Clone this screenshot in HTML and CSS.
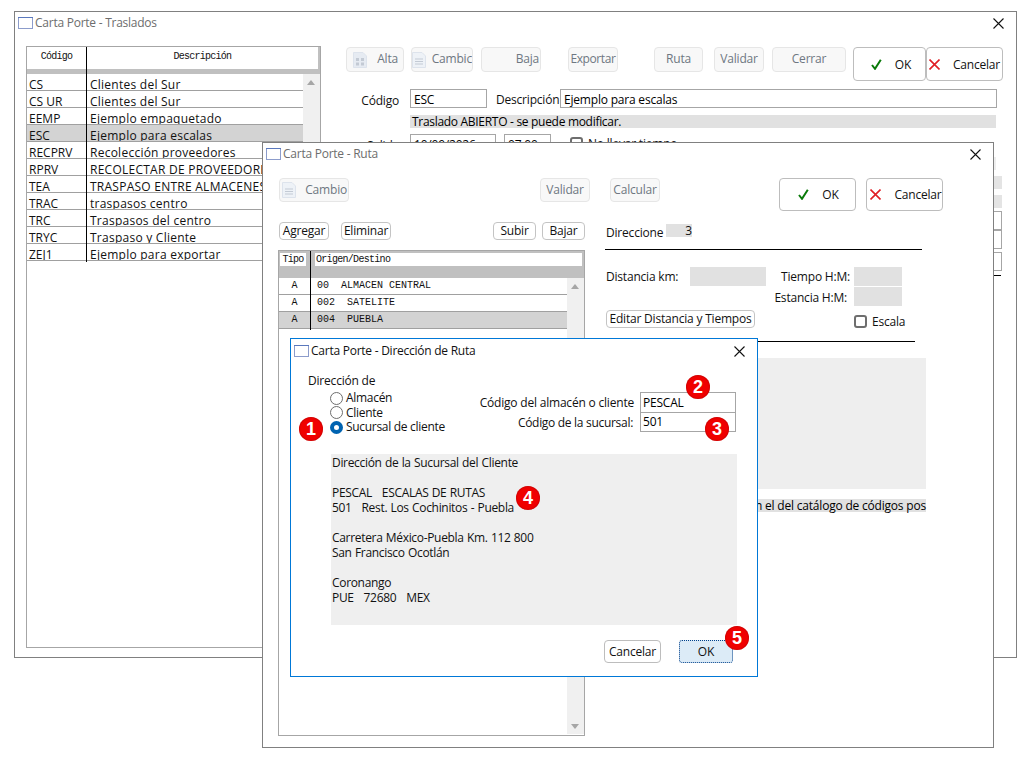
FILE: index.html
```html
<!DOCTYPE html>
<html>
<head>
  <meta charset="utf-8">
  <title>Carta Porte</title>
  <link rel="stylesheet" href="styles.css">
</head>
<body>
<svg class="defs" width="0" height="0">
  <symbol id="ico-win" viewBox="0 0 15 12">
    <rect x="0.5" y="0.5" width="14" height="11" fill="#fff" stroke="#8c9ccb"/>
    <path d="M0 0.5H15" stroke="#5a78bd"/>
  </symbol>
  <symbol id="ico-close" viewBox="0 0 11 11">
    <path d="M0.5 0.5L10.5 10.5M10.5 0.5L0.5 10.5" stroke="#111" stroke-width="1.1" fill="none"/>
  </symbol>
  <symbol id="ico-check" viewBox="0 0 11 11">
    <path d="M1 6L4 9.8L9.8 0.8" stroke="#0a7a0a" stroke-width="2" fill="none"/>
  </symbol>
  <symbol id="ico-x" viewBox="0 0 11 11">
    <path d="M0.5 0.5L10.5 10.5M10.5 0.5L0.5 10.5" stroke="#e01f26" stroke-width="1.6" fill="none"/>
  </symbol>
  <symbol id="ico-grid" viewBox="0 0 14 16">
    <path d="M0.5 0.5H10L13.5 4V15.5H0.5Z" fill="#e6ebf2" stroke="#dde3ec"/>
    <path d="M3 6H6V9H3ZM8 6H11V9H8ZM3 10.5H6V13.5H3ZM8 10.5H11V13.5H8Z" fill="#c3cad4"/>
  </symbol>
  <symbol id="ico-list" viewBox="0 0 14 16">
    <path d="M0.5 0.5H10L13.5 4V15.5H0.5Z" fill="#eef2f7" stroke="#dde3ec"/>
    <path d="M3 7H11M3 9.5H11M3 12H11" stroke="#c3cad4"/>
  </symbol>
</svg>

<!-- ventana de atras -->
<div class="win win-back">
  <div class="title">
    <svg class="ico-win"><use href="#ico-win"/></svg>
    <span class="title-txt">Carta Porte - Traslados</span>
    <svg class="ico-close"><use href="#ico-close"/></svg>
  </div>
  <div class="back-body">
    <div class="list">
      <div class="rule"></div>
      <div class="list-head">
        <div class="lh-code">Código</div>
        <div class="lh-desc">Descripción</div>
      </div>
      <div class="list-main">
        <div class="rows">
          <div class="row"><span class="c-code">CS</span><span>Clientes del Sur</span></div>
          <div class="row"><span class="c-code">CS UR</span><span>Clientes del Sur</span></div>
          <div class="row"><span class="c-code">EEMP</span><span>Ejemplo empaquetado</span></div>
          <div class="row sel"><span class="c-code">ESC</span><span>Ejemplo para escalas</span></div>
          <div class="row"><span class="c-code">RECPRV</span><span>Recolección proveedores</span></div>
          <div class="row"><span class="c-code">RPRV</span><span>RECOLECTAR DE PROVEEDORES</span></div>
          <div class="row"><span class="c-code">TEA</span><span>TRASPASO ENTRE ALMACENES</span></div>
          <div class="row"><span class="c-code">TRAC</span><span>traspasos centro</span></div>
          <div class="row"><span class="c-code">TRC</span><span>Traspasos del centro</span></div>
          <div class="row"><span class="c-code">TRYC</span><span>Traspaso y Cliente</span></div>
          <div class="row"><span class="c-code">ZEJ1</span><span>Ejemplo para exportar</span></div>
        </div>
        <div class="sbar"><i class="arr-up"></i></div>
      </div>
    </div>

    <div class="back-right">
      <div class="toolbar">
        <div class="btn off w-alta"><svg class="ico-doc"><use href="#ico-grid"/></svg><span class="push">Alta</span></div>
        <div class="btn off w-cambio"><svg class="ico-doc"><use href="#ico-list"/></svg><span class="push">Cambic</span></div>
        <div class="btn off w-baja"><span class="push">Baja</span></div>
        <div class="btn off w-exp">Exportar</div>
        <div class="btn off w-ruta">Ruta</div>
        <div class="btn off w-val">Validar</div>
        <div class="btn off w-cerrar">Cerrar</div>
        <div class="btn big w-ok"><svg class="ico-mark"><use href="#ico-check"/></svg>OK</div>
        <div class="btn big w-can"><svg class="ico-mark"><use href="#ico-x"/></svg>Cancelar</div>
      </div>
      <div class="frow f1">
        <label class="f-lab">Código</label>
        <div class="inp i-cod">ESC</div>
        <label class="f-desc">Descripción</label>
        <div class="inp i-desc">Ejemplo para escalas</div>
      </div>
      <div class="strip s-estado">Traslado ABIERTO - se puede modificar.</div>
      <div class="frow f3">
        <label class="f-lab">Salida</label>
        <div class="inp i-fecha">10/09/2026</div>
        <div class="inp i-hora">07:00</div>
        <i class="chk"></i>
        <span>No llevar tiempo</span>
      </div>
      <div class="tail">
        <div class="t-strip t1"></div>
        <div class="t-strip t2"></div>
        <div class="t-strip t3"></div>
        <div class="inp t-inp t4"></div>
        <div class="inp t-inp t5"></div>
        <div class="inp t-inp t6"></div>
        <div class="t-line"></div>
      </div>
    </div>
  </div>
</div>

<!-- ventana ruta -->
<div class="win win-ruta">
  <div class="title">
    <svg class="ico-win"><use href="#ico-win"/></svg>
    <span class="title-txt">Carta Porte - Ruta</span>
    <svg class="ico-close"><use href="#ico-close"/></svg>
  </div>
  <div class="ruta-body">
    <div class="toolbar r-tools">
      <div class="btn off w-rcambio"><svg class="ico-doc"><use href="#ico-list"/></svg><span class="push">Cambio</span></div>
      <div class="btn off w-rval">Validar</div>
      <div class="btn off w-rcalc">Calcular</div>
      <div class="btn big w-rok"><svg class="ico-mark"><use href="#ico-check"/></svg>OK</div>
      <div class="btn big w-rcan"><svg class="ico-mark"><use href="#ico-x"/></svg>Cancelar</div>
    </div>
    <div class="ruta-cols">
      <div class="ruta-left">
        <div class="acts">
          <div class="btn small w-agr">Agregar</div>
          <div class="btn small w-eli">Eliminar</div>
          <div class="btn small w-sub">Subir</div>
          <div class="btn small w-baj">Bajar</div>
        </div>
        <div class="dest">
          <div class="rule2"></div>
          <div class="dest-head">
            <div class="dh-tipo">Tipo</div>
            <div class="dh-org">Origen/Destino</div>
          </div>
          <div class="dest-main">
            <div class="rows">
              <div class="drow"><span class="d-tipo">A</span><span>00  ALMACEN CENTRAL</span></div>
              <div class="drow"><span class="d-tipo">A</span><span>002  SATELITE</span></div>
              <div class="drow sel"><span class="d-tipo">A</span><span>004  PUEBLA</span></div>
            </div>
            <div class="sbar sbar2"><i class="arr-up"></i><i class="arr-down"></i></div>
          </div>
        </div>
      </div>
      <div class="ruta-right">
        <div class="dirs"><span class="dirs-lab">Direccione</span><span class="gbox g-dirs">3</span></div>
        <div class="hline l1"></div>
        <div class="drow1">
          <span class="lab-dist">Distancia km:</span><span class="gbox g-dist"></span>
          <span class="lab-tiempo">Tiempo H:M:</span><span class="gbox g-time"></span>
        </div>
        <div class="drow2">
          <span class="lab-est">Estancia H:M:</span><span class="gbox g-time"></span>
        </div>
        <div class="drow3">
          <div class="btn small w-edit">Editar Distancia y Tiempos</div>
          <i class="chk chk-esc"></i><span>Escala</span>
        </div>
        <div class="hline l2"></div>
        <div class="gpanel"></div>
        <div class="strip s-cat"><span>n el del catálogo de códigos pos</span></div>
      </div>
    </div>
  </div>
</div>

<!-- dialogo -->
<div class="win win-dlg">
  <div class="title title-on">
    <svg class="ico-win"><use href="#ico-win"/></svg>
    <span class="title-txt">Carta Porte - Dirección de Ruta</span>
    <svg class="ico-close"><use href="#ico-close"/></svg>
  </div>
  <div class="dlg-top">
    <div class="dlg-radios">
      <div class="rad-title">Dirección de</div>
      <div class="rad"><i class="radio"></i>Almacén</div>
      <div class="rad"><i class="radio"></i>Cliente</div>
      <div class="rad"><i class="radio on"></i>Sucursal de cliente</div>
    </div>
    <div class="dlg-codes">
      <div class="code-row"><label>Código del almacén o cliente</label><div class="inp i-c1">PESCAL</div></div>
      <div class="code-row r2"><label>Código de la sucursal:</label><div class="inp i-c2">501</div></div>
    </div>
  </div>
  <pre class="addr">Dirección de la Sucursal del Cliente

PESCAL   ESCALAS DE RUTAS
501   Rest. Los Cochinitos - Puebla

Carretera México-Puebla Km. 112 800
San Francisco Ocotlán

Coronango
PUE   72680   MEX</pre>
  <div class="dlg-foot">
    <div class="btn foot-can">Cancelar</div>
    <div class="btn foot-ok">OK</div>
  </div>
  <span class="badge b1">1</span>
  <span class="badge b2">2</span>
  <span class="badge b3">3</span>
  <span class="badge b4">4</span>
  <span class="badge b5">5</span>
</div>
</body>
</html>
```

FILE: styles.css
```css
* {
  box-sizing: border-box;
}
html, body {
  margin: 0;
  height: 100%;
  background: #fff;
}
body {
  position: relative;
  overflow: hidden;
  font-family: "Open Sans", "Noto Sans", sans-serif;
  font-size: 12px;
  letter-spacing: -0.2px;
  color: #111;
}
.defs {
  position: absolute;
}
label {
  display: block;
}
i {
  display: block;
}

/* ventanas */
.win {
  position: absolute;
  background: #fff;
  border: 1px solid #808080;
}
.win-back {
  left: 14px;
  top: 11px;
  width: 1003px;
  height: 647px;
}
.win-ruta {
  left: 262px;
  top: 142px;
  width: 732px;
  height: 606px;
}
.win-dlg {
  left: 290px;
  top: 338px;
  width: 468px;
  height: 339px;
  border-color: #0078d7;
}
.title {
  display: flex;
  align-items: center;
  height: 22px;
  padding: 0 12px 0 3px;
  color: #6d6d6d;
}
.title-on {
  height: 24px;
  color: #111;
}
.title-txt {
  padding-bottom: 2px;
  letter-spacing: -0.25px;
}
.ico-win {
  width: 15px;
  height: 12px;
  margin-right: 2px;
}
.ico-close {
  width: 11px;
  height: 11px;
  margin-left: auto;
}
.ico-doc {
  flex: none;
  width: 14px;
  height: 16px;
  margin-left: 6px;
}
.ico-mark {
  flex: none;
  width: 11px;
  height: 11px;
  margin-right: 13px;
}

/* botones */
.btn {
  display: flex;
  align-items: center;
  justify-content: center;
  flex: none;
  background: #fff;
  border: 1px solid #bdbdbd;
  border-radius: 4px;
  white-space: nowrap;
  overflow: hidden;
}
.off {
  height: 25px;
  padding-bottom: 2px;
  background: #f8f8f8;
  border-color: #e6e6e6;
  color: #6e7781;
}
.off .ico-doc {
  margin-top: 2px;
}
.big {
  height: 34px;
}
.small {
  height: 18px;
  padding-bottom: 2px;
  border-color: #c4c4c4;
}
.push {
  margin-left: auto;
  padding-right: 5px;
}
.toolbar {
  display: flex;
  align-items: flex-start;
}
.w-alta { width: 58px; }
.w-cambio { width: 62px; margin-left: 7px; }
.w-cambio .ico-doc { margin-left: 0; }
.w-cambio .push { padding-right: 0; }
.w-baja { width: 60px; margin-left: 8px; }
.w-baja .push { padding-right: 1px; }
.w-exp { width: 50px; margin-left: 27px; letter-spacing: -0.4px; }
.w-ruta { width: 49px; margin-left: 36px; }
.w-val { width: 50px; margin-left: 11px; }
.w-cerrar { width: 74px; margin-left: 8px; }
.w-ok { width: 73px; margin-left: 7px; padding-left: 3px; }
.w-can { width: 77px; }

/* cuerpo ventana de atras */
.back-body {
  display: flex;
  padding: 12px 0 0 11px;
}
.list {
  position: relative;
  flex: none;
  width: 295px;
  height: 602px;
  border: 1px solid #a6a6a6;
}
.rule {
  position: absolute;
  left: 59px;
  top: 0;
  width: 1px;
  height: 215px;
  background: #000;
}
.list-head {
  display: flex;
  height: 27px;
  padding-bottom: 5px;
  padding-right: 2px;
  background: #c0c0c0;
  font-family: "Liberation Mono", monospace;
  font-size: 10px;
  letter-spacing: -0.75px;
  line-height: 20px;
  text-align: center;
}
.lh-code {
  width: 59px;
  margin-right: 1px;
  background: #fff;
}
.lh-desc {
  flex: 1;
  background: #fff;
}
.list-main,
.dest-main {
  display: flex;
}
.rows {
  flex: 1;
}
.row {
  display: flex;
  height: 17px;
  padding: 0 0 0 2px;
  border-bottom: 1px solid #a0a0a0;
  line-height: 22px;
  letter-spacing: 0.25px;
  white-space: nowrap;
  overflow: hidden;
}
.c-code {
  width: 61px;
  flex: none;
  letter-spacing: 0;
}
.sel {
  background: #d3d3d3;
}
.sbar {
  position: relative;
  flex: none;
  width: 17px;
  height: 573px;
  background: #f0f0f0;
}
.sbar2 {
  height: 456px;
}
.arr-up,
.arr-down {
  position: absolute;
  left: 4px;
  width: 0;
  height: 0;
  border-left: 4px solid transparent;
  border-right: 4px solid transparent;
}
.arr-up {
  top: 6px;
  border-bottom: 5px solid #a6a6a6;
}
.arr-down {
  bottom: 5px;
  border-top: 5px solid #a6a6a6;
}

.back-right {
  flex: 1;
  margin-left: 25px;
  padding-top: 1px;
}
.frow {
  display: flex;
  align-items: center;
}
.f1 {
  height: 19px;
  margin-top: 8px;
}
.f-lab {
  width: 53px;
  margin-right: 11px;
  padding-top: 3px;
  text-align: right;
}
.f-desc {
  width: 61px;
  margin: 0 3px 0 9px;
  padding-top: 1px;
}
.inp {
  flex: none;
  height: 19px;
  padding-left: 3px;
  border: 1px solid #a6a6a6;
  background: #fff;
  color: #000;
  line-height: 19px;
}
.i-cod { width: 77px; }
.i-desc { width: 437px; }
.strip {
  background: #e1e1e1;
  color: #000;
  line-height: 13px;
  white-space: nowrap;
}
.s-estado {
  width: 586px;
  height: 13px;
  margin: 7px 0 0 64px;
  padding-left: 2px;
  letter-spacing: -0.3px;
}
.f3 {
  height: 19px;
  margin-top: 6px;
}
.i-fecha { width: 86px; }
.i-hora { width: 47px; margin-left: 8px; }
.chk {
  flex: none;
  width: 13px;
  height: 13px;
  margin: 0 5px 0 19px;
  border: 2px solid #6e6e6e;
  border-radius: 3px;
  background: #fff;
}
.tail {
  margin-left: 64px;
}
.t-strip {
  height: 13px;
  background: #e4e4e4;
}
.t1 { width: 586px; margin-top: 4px; background: #eee; }
.t2 { width: 592px; margin-top: 6px; }
.t3 { width: 592px; margin-top: 6px; }
.t-inp { width: 592px; }
.t4 { margin-top: 3px; }
.t5 { margin-top: 0; }
.t6 { margin-top: 3px; }
.t-line {
  width: 591px;
  height: 1px;
  margin-top: 4px;
  background: #000;
}

/* cuerpo ruta */
.ruta-body {
  padding: 13px 0 0 16px;
}
.r-tools .off {
  height: 24px;
}
.w-rcambio { width: 70px; }
.w-rcambio .ico-doc { margin-left: 2px; }
.w-rcambio .push { padding-right: 1px; }
.w-rval { width: 50px; margin-left: 191px; }
.w-rcalc { width: 50px; margin-left: 20px; }
.w-rok { width: 77px; margin-left: 119px; height: 33px; padding-left: 2px; }
.w-rcan { width: 77px; margin-left: 10px; height: 33px; padding-left: 3px; }
.ruta-cols {
  display: flex;
  margin-top: 11px;
}
.ruta-left {
  flex: none;
  width: 306px;
}
.acts {
  display: flex;
}
.w-agr { width: 50px; }
.w-eli { width: 50px; margin-left: 12px; }
.w-sub { width: 43px; margin-left: 102px; }
.w-baj { width: 43px; margin-left: 6px; }
.dest {
  position: relative;
  width: 307px;
  height: 486px;
  margin: 10px 0 0 -1px;
  border: 1px solid #a6a6a6;
}
.rule2 {
  position: absolute;
  left: 31px;
  top: 0;
  width: 1px;
  height: 79px;
  background: #000;
}
.dest-head {
  display: flex;
  height: 27px;
  padding: 2px 2px 12px 1px;
  background: #c0c0c0;
  font-family: "Liberation Mono", monospace;
  font-size: 10px;
  letter-spacing: -0.7px;
  line-height: 13px;
}
.dh-tipo {
  width: 26px;
  margin-right: 9px;
  background: #fff;
  text-align: center;
}
.dh-org {
  flex: 1;
  padding-left: 1px;
  background: #fff;
}
.drow {
  display: flex;
  height: 17px;
  border-bottom: 1px solid #a0a0a0;
  font-family: "Liberation Mono", monospace;
  font-size: 10px;
  letter-spacing: 0;
  line-height: 15px;
  white-space: pre;
}
.d-tipo {
  width: 31px;
  margin-right: 7px;
  text-align: center;
}

.ruta-right {
  flex: none;
  width: 320px;
  margin-left: 21px;
  padding-top: 2px;
}
.dirs {
  display: flex;
  height: 13px;
  line-height: 17px;
}
.dirs-lab {
  width: 60px;
}
.gbox {
  display: block;
  flex: none;
  background: #e1e1e1;
}
.g-dirs {
  width: 26px;
  text-align: right;
  line-height: 13px;
}
.hline {
  height: 1px;
  background: #000;
}
.l1 {
  width: 317px;
  margin: 12px 0 0 -1px;
}
.l2 {
  width: 309px;
  margin-top: 13px;
}
.drow1,
.drow2 {
  display: flex;
  align-items: center;
  height: 19px;
}
.drow1 {
  margin-top: 17px;
}
.drow2 {
  margin-top: 1px;
}
.lab-dist { width: 84px; }
.g-dist { width: 76px; height: 19px; }
.lab-tiempo { width: 84px; text-align: right; margin-right: 4px; }
.g-time { width: 48px; height: 19px; }
.lab-est { width: 81px; margin-left: 160px; margin-right: 7px; padding-top: 2px; text-align: right; }
.drow3 {
  display: flex;
  align-items: center;
  height: 18px;
  margin-top: 4px;
}
.w-edit {
  width: 149px;
}
.chk-esc {
  margin: 4px 5px 0 99px;
}
.drow3 span {
  margin-top: 4px;
}
.gpanel {
  height: 131px;
  margin-top: 16px;
  background: #eee;
}
.s-cat {
  display: flex;
  justify-content: flex-end;
  height: 13px;
  margin-top: 10px;
}

/* dialogo */
.dlg-top {
  display: flex;
  padding: 11px 0 0 17px;
}
.dlg-radios {
  flex: none;
  width: 170px;
}
.rad-title {
  height: 17px;
  line-height: 14px;
}
.rad {
  display: flex;
  align-items: center;
  height: 14.5px;
  padding-left: 22px;
  line-height: 14px;
  letter-spacing: -0.3px;
}
.radio {
  flex: none;
  width: 13px;
  height: 13px;
  margin-right: 3px;
  border: 1px solid #6e6e6e;
  border-radius: 50%;
  background: #fff;
}
.radio.on {
  border: 4px solid #0063b1;
}
.dlg-codes {
  padding-top: 18px;
}
.code-row {
  display: flex;
  align-items: center;
}
.code-row label {
  width: 156px;
  margin-right: 6px;
  text-align: right;
}
.r2 {
  margin-top: -1px;
}
.r2 label {
  padding-right: 1px;
  letter-spacing: -0.3px;
}
.i-c1 {
  width: 96px;
  height: 21px;
  padding-left: 2px;
  line-height: 19px;
}
.i-c2 {
  width: 96px;
  height: 20px;
  padding-left: 2px;
  line-height: 18px;
}
.addr {
  width: 406px;
  height: 171px;
  margin: 19px 0 0 40px;
  padding: 1px 0 0 1px;
  background: #efefef;
  font: inherit;
  letter-spacing: -0.32px;
  word-spacing: 0.5px;
  line-height: 15px;
  color: #111;
}
.dlg-foot {
  display: flex;
  justify-content: flex-end;
  margin-top: 15px;
  padding-right: 24px;
}
.dlg-foot .btn {
  height: 23px;
  color: #111;
}
.foot-can {
  width: 57px;
}
.foot-ok {
  width: 54px;
  margin-left: 18px;
  background: #dcebf7;
  border: 1px dotted #00408a;
  border-radius: 3px;
}

/* numeros rojos */
.badge {
  position: absolute;
  width: 24px;
  height: 24px;
  border-radius: 50%;
  background: #f00000;
  color: #fff;
  font-family: "Liberation Sans", sans-serif;
  font-size: 18px;
  font-weight: bold;
  letter-spacing: 0;
  line-height: 24px;
  text-align: center;
  box-shadow: inset 0 0 2px #a00000;
}
.b1 { left: 8px; top: 78px; }
.b2 { left: 395px; top: 36px; }
.b3 { left: 414px; top: 78px; }
.b4 { left: 225px; top: 147px; }
.b5 { left: 434px; top: 287px; }
```
